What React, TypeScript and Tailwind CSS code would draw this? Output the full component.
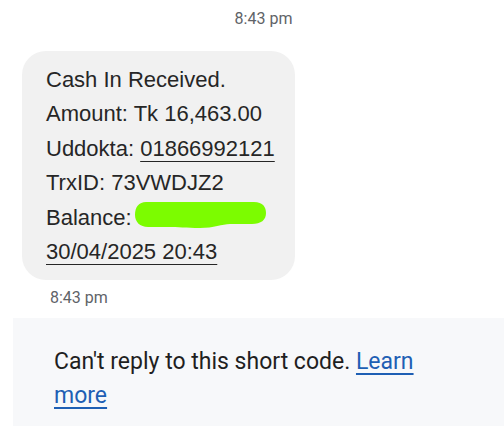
function BlurBlob() {
  // green scribble hiding the balance
  return (
    <svg width="134" height="30" viewBox="0 0 134 30" className="inline-block align-middle -mt-[3px] ml-[2px]">
      <path
        d="M12 1 L120 1 C129 1 132 6 132 12 C132 19 127 23 118 23 L96 23 C88 23 80 27 66 27 C52 27 44 26 34 26 L14 26 C6 26 1 21 1 14 C1 6 5 1 12 1 Z"
        fill="#7cfc00"
      />
    </svg>
  );
}

export default function App() {
  return (
    <div className="w-[504px] h-[426px] overflow-hidden bg-white flex flex-col">
      <div className="flex justify-center pl-[23px] pt-[8px] text-[16px] leading-[22px] text-[#5f6368] font-['Roboto',sans-serif]">
        8:43 pm
      </div>

      <div className="ml-[22px] mt-[21px] w-[273px] rounded-[24px] bg-[#f1f1f1] pl-[24px] pt-[12px] pb-[11px] font-['Liberation_Sans',Arial,sans-serif] text-[22px] leading-[34.4px] text-[#262626]">
        <div>Cash In Received.</div>
        <div>Amount: Tk 16,463.00</div>
        <div>
          Uddokta: <span className="underline underline-offset-[5px] decoration-1">01866992121</span>
        </div>
        <div>TrxID: 73VWDJZ2</div>
        <div className="flex items-center">
          <span>Balance:</span>
          <BlurBlob />
        </div>
        <div>
          <span className="underline underline-offset-[5px] decoration-1">30/04/2025 20:43</span>
        </div>
      </div>

      <div className="pl-[50px] pt-[7px] text-[16px] leading-[22px] text-[#5f6368] font-['Roboto',sans-serif]">
        8:43 pm
      </div>

      <div className="ml-[13px] mt-[9px] flex-1 bg-[#f7f8fa] pl-[41px] pr-[80px] pt-[27px] font-['Roboto',sans-serif] text-[23px] leading-[34px] text-[#1f1f1f]">
        Can't reply to this short code.{" "}
        <a className="text-[#1e5fb4] underline underline-offset-[4px] decoration-2">Learn more</a>
      </div>
    </div>
  );
}
